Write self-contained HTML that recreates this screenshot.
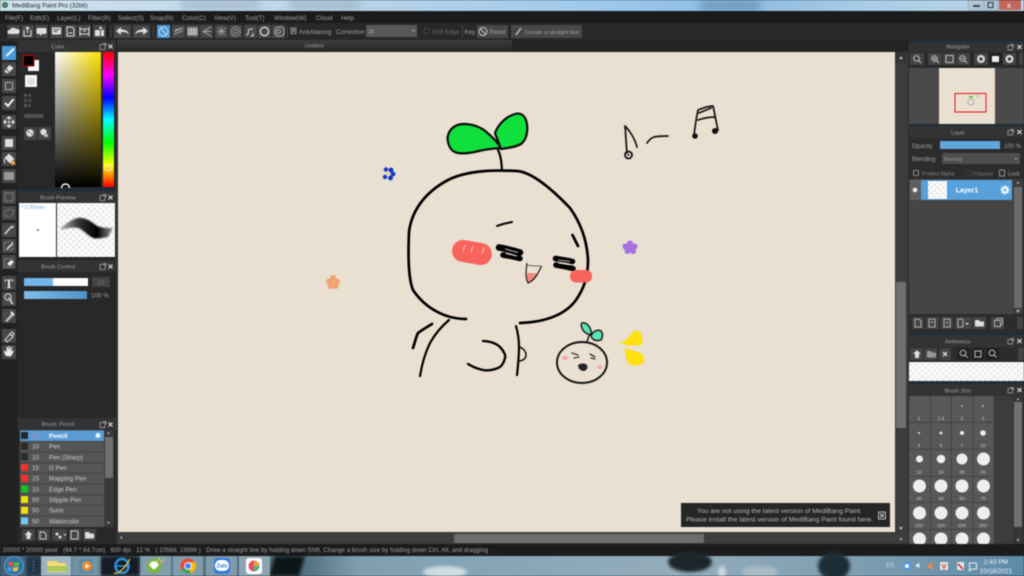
<!DOCTYPE html>
<html><head><meta charset="utf-8"><title>MediBang Paint Pro</title>
<style>
html,body{margin:0;padding:0;width:1024px;height:576px;overflow:hidden;background:#222}
svg{display:block;filter:blur(.42px)}
text{font-family:"Liberation Sans",sans-serif;font-size:6.3px;fill:#a2a2a2;white-space:pre}
.m{text-anchor:middle}
.b{fill:#484848}
.i{fill:#ddd}
.s{fill:none;stroke:#ddd;stroke-width:1}
.k{fill:none;stroke:#000;stroke-width:2.7;stroke-linecap:round;stroke-linejoin:round}
.k1{fill:none;stroke:#111;stroke-width:1.7;stroke-linecap:round;stroke-linejoin:round}
</style></head><body>
<svg width="1024" height="576" viewBox="0 0 1024 576" xmlns="http://www.w3.org/2000/svg">
<defs>
<linearGradient id="tb" x1="0" x2="1" y1="0" y2="0"><stop offset="0" stop-color="#cfe2ee"/><stop offset=".3" stop-color="#bcd6ea"/><stop offset=".45" stop-color="#aecfe9"/><stop offset=".6" stop-color="#9cc8ec"/><stop offset=".72" stop-color="#8dbbe0"/><stop offset=".85" stop-color="#a9cde6"/><stop offset="1" stop-color="#bcd6e6"/></linearGradient>
<linearGradient id="sv1" x1="0" x2="1" y1="0" y2="0"><stop offset="0" stop-color="#fff"/><stop offset="1" stop-color="#ffe000"/></linearGradient>
<linearGradient id="sv2" x1="0" x2="0" y1="0" y2="1"><stop offset="0" stop-color="#000" stop-opacity="0"/><stop offset="1" stop-color="#000"/></linearGradient>
<linearGradient id="hue" x1="0" x2="0" y1="0" y2="1"><stop offset="0" stop-color="#f00"/><stop offset=".17" stop-color="#f0f"/><stop offset=".34" stop-color="#00f"/><stop offset=".5" stop-color="#0ff"/><stop offset=".67" stop-color="#0f0"/><stop offset=".84" stop-color="#ff0"/><stop offset="1" stop-color="#f00"/></linearGradient>
<linearGradient id="task" x1="0" x2="1" y1="0" y2="0"><stop offset="0" stop-color="#3f6278"/><stop offset=".1" stop-color="#5d8094"/><stop offset=".29" stop-color="#4b6878"/><stop offset=".35" stop-color="#7f9fb0"/><stop offset=".5" stop-color="#88a6b8"/><stop offset=".66" stop-color="#93acba"/><stop offset=".85" stop-color="#7c9db0"/><stop offset="1" stop-color="#5d8aa8"/></linearGradient>
<linearGradient id="blue" x1="0" x2="1" y1="0" y2="0"><stop offset="0" stop-color="#7fbdec"/><stop offset="1" stop-color="#4d93cb"/></linearGradient>
<linearGradient id="tab" x1="0" x2="0" y1="0" y2="1"><stop offset="0" stop-color="#3c3c3c"/><stop offset="1" stop-color="#262626"/></linearGradient>
<pattern id="chk" width="6" height="6" patternUnits="userSpaceOnUse"><rect width="6" height="6" fill="#fff"/><rect width="3" height="3" fill="#eaeaea"/><rect x="3" y="3" width="3" height="3" fill="#eaeaea"/></pattern>
<filter id="bl"><feGaussianBlur stdDeviation="1.600"/></filter>
<filter id="bl2"><feGaussianBlur stdDeviation="4"/></filter>
<filter id="bl3"><feGaussianBlur stdDeviation=".7"/></filter>
<linearGradient id="stroke" x1="0" x2="1" y1="0" y2="0"><stop offset="0" stop-color="#bbb"/><stop offset=".35" stop-color="#333"/><stop offset=".7" stop-color="#000"/><stop offset="1" stop-color="#999"/></linearGradient>
</defs>

<!-- base -->
<rect width="1024" height="576" fill="#1f1f1f"/>

<!-- title bar -->
<rect width="1024" height="11" fill="url(#tb)"/>
<g filter="url(#bl2)"><rect x="180" y="0" width="80" height="10" fill="#a9bfd0"/><rect x="700" y="0" width="60" height="11" fill="#6f9cc0"/><rect x="290" y="1" width="70" height="8" fill="#9fb6c6"/></g>
<circle cx="5" cy="5" r="3" fill="#16805a"/><circle cx="5" cy="5" r="1.300" fill="#e9607a"/>
<text x="12" y="7.600" style="fill:#2a2a2a">MediBang Paint Pro (32bit)</text>
<rect x="968" y="0" width="16" height="10" rx="1" fill="#b0c6d6" stroke="#7e96a6" stroke-width=".5"/>
<rect x="973" y="5" width="7" height="2" fill="#444"/>
<rect x="984" y="0" width="14" height="10" fill="#b0c6d6" stroke="#7e96a6" stroke-width=".5"/>
<rect x="988" y="2.500" width="5" height="5" fill="none" stroke="#333" stroke-width="1"/>
<rect x="999" y="0" width="22" height="10" rx="1" fill="#c2655a"/>
<text x="1007" y="8" style="fill:#fff;font-size:8px">x</text>

<!-- menu -->
<rect y="11" width="1024" height="12" fill="#1b1b1b"/>
<g style="font-size:6.500px">
<text x="5" y="20">File(F)</text><text x="30" y="20">Edit(E)</text><text x="57" y="20">Layer(L)</text><text x="88" y="20">Filter(R)</text><text x="118" y="20">Select(S)</text><text x="150" y="20">Snap(N)</text><text x="182" y="20">Color(C)</text><text x="214" y="20">View(V)</text><text x="245" y="20">Tool(T)</text><text x="274" y="20">Window(W)</text><text x="316" y="20">Cloud</text><text x="341" y="20">Help</text>
</g>

<!-- toolbar -->
<rect y="23" width="1024" height="17" fill="#282828"/>
<rect x="6" y="25" width="102" height="13" fill="#1c1c1c"/>
<g class="b">
<rect x="7" y="25" width="13" height="13"/><rect x="21" y="25" width="13" height="13"/><rect x="35" y="25" width="13" height="13"/><rect x="50" y="25" width="13" height="13"/><rect x="64" y="25" width="13" height="13"/><rect x="78" y="25" width="13" height="13"/><rect x="93" y="25" width="13" height="13"/>
<rect x="114" y="25" width="17" height="13"/><rect x="133" y="25" width="17" height="13"/>
<rect x="172" y="25" width="13" height="13"/><rect x="186" y="25" width="13" height="13"/><rect x="200" y="25" width="13" height="13"/><rect x="215" y="25" width="13" height="13"/><rect x="229" y="25" width="13" height="13"/><rect x="244" y="25" width="13" height="13"/><rect x="258" y="25" width="13" height="13"/><rect x="272" y="25" width="13" height="13"/>
</g>
<rect x="157" y="25" width="13" height="13" fill="#4d96d4"/>
<g>
<path class="i" d="M9 34a2 2 0 0 1 1-4 3.500 3.500 0 0 1 6-1 2.600 2.600 0 0 1 2 5z"/>
<path class="s" d="M24 30v6h7v-6M27.500 33v-6M25.500 29l2-2 2 2"/>
<path class="i" d="M38 28h7a1.500 1.500 0 0 1 1.500 1.500v3a1.500 1.500 0 0 1-1.500 1.500h-3l-2 2v-2h-2a1.500 1.500 0 0 1-1.500-1.500v-3a1.500 1.500 0 0 1 1.500-1.500z"/>
<rect class="i" x="52" y="27.500" width="9" height="7" rx="1"/><path d="M53.500 29.500h6M53.500 31.500h4" stroke="#484848"/>
<path class="s" d="M67 27h5l2 2v7h-7zM68.500 33h4"/>
<path class="s" stroke-width=".8" d="M80 27v9M89 27v9M80 29h9M80 34h9M83 31h3"/>
<path class="i" d="M95 30h5v6h-5zM101 30h3v6h-3zM100 26l3 3h-4z"/>
<path class="i" d="M116 31l5-4v2.500c4 0 7 1 8 5-2-2-4-2.500-8-2.500v3z"/>
<path class="i" d="M148 31l-5-4v2.500c-4 0-7 1-8 5 2-2 4-2.500 8-2.500v3z"/>
<circle cx="163.500" cy="31.500" r="4.500" fill="none" stroke="#bfe0fa" stroke-width="1"/><path d="M160.500 28l6 7" stroke="#bfe0fa"/>
<path d="M174 32l9-4M174 34.500l9-4M175 30l8-2" stroke="#999" stroke-width="1.200" fill="none"/>
<path d="M188 28h9v7h-9zM191 28v7M194 28v7M188 30.500h9M188 33h9" stroke="#ccc" stroke-width=".8" fill="#888"/>
<path d="M211 27l-8 4.500 8 4.500M203 31.500h8" stroke="#aaa" fill="none"/>
<path d="M221.500 27v9M217 31.500h9M218 28l7 7M225 28l-7 7" stroke="#bbb" stroke-dasharray="1.500 .8"/>
<circle cx="235.500" cy="31.500" r="4.500" fill="none" stroke="#999" stroke-dasharray="1 .6" stroke-width="1.400"/><circle cx="235.500" cy="31.500" r="2" fill="none" stroke="#999"/>
<path class="s" d="M246 35c4 0 1-6 4-6h3M253 33v3h-2"/>
<circle cx="264.500" cy="31.500" r="4.200" fill="none" stroke="#ddd" stroke-width="1.300"/>
<path d="M275 29l2-2h5l2 2v5l-2 2h-5l-2-2z" fill="none" stroke="#aaa"/><circle cx="278.500" cy="31.500" r="2" fill="none" stroke="#aaa"/>
</g>
<rect x="110.500" y="26" width=".8" height="11" fill="#555"/><rect x="153" y="26" width=".8" height="11" fill="#555"/><rect x="287" y="26" width=".8" height="11" fill="#555"/>
<rect x="291" y="28" width="5" height="5.500" fill="none" stroke="#aaa" stroke-width=".8"/><path d="M292 29l3 3M295 29l-3 3" stroke="#ccc" stroke-width=".6"/>
<text x="299" y="34" style="font-size:6.200px">AntiAliasing</text>
<text x="336" y="34" style="font-size:6.200px">Correction</text>
<rect x="366" y="25" width="51" height="12" fill="#585858"/><text x="368" y="33.500" style="font-size:5.500px;fill:#aaa">26</text><path d="M412 30h3l-1.500 2z" fill="#aaa"/>
<rect x="424" y="28.500" width="5" height="5" fill="none" stroke="#444" stroke-width=".8"/>
<text x="432" y="34" style="fill:#6e6e6e;font-size:6.200px">Soft Edge</text>
<rect x="462" y="25" width=".8" height="12" fill="#555"/>
<text x="464.500" y="34" style="font-size:6.200px">Key</text>
<rect x="477" y="25" width="31" height="13" fill="#474747"/><circle cx="483" cy="31.500" r="4" fill="none" stroke="#ccc"/><path d="M480 28.500l6 6" stroke="#ccc"/><text x="489.500" y="34" style="font-size:6.200px">Reset</text>
<rect x="511" y="25" width="71" height="13" fill="#474747"/><path d="M516 35l5-7" stroke="#ccc" stroke-width="1.200"/><text x="525" y="34" style="font-size:5.900px">Create a straight line</text>

<!-- tab -->
<rect x="117" y="40" width="790" height="12" fill="#242424"/>
<rect x="117" y="40" width="395" height="12" fill="url(#tab)"/>
<text x="314" y="47.500" class="m" style="font-size:5.500px;fill:#9a9a9a">Untitled</text>

<!-- canvas -->
<rect x="116" y="52" width="2" height="492" fill="#333"/>
<rect x="118" y="52" width="777" height="480" fill="#eae0d2"/>

<!-- drawing -->
<path d="M495 133c3-8 10-16 20-19 7-2 11 3 12 10 1 9-1 16-6 20-5 3-13 4-20 5-2-6-4-10-6-16z" fill="#10e03c" stroke="#0b0b0b" stroke-width="2.200" stroke-linejoin="round"/>
<path d="M447.500 138c1-9 8-14 16-14 9 0 18 3 24 9 6 5 11 11 13.500 15-7 .5-14 1-22 3-8 2-15 3-21 2-6-1-10-6-10.500-15z" fill="#10e03c" stroke="#0b0b0b" stroke-width="2.200" stroke-linejoin="round"/>
<path class="k" style="stroke-width:2.200" d="M498 150c3 6 3.500 13 4 20"/>
<path class="k" d="M466 319C445 319 425 308 413 290C408 278 408 255 409 232C412 208 428 190 450 179C470 170 495 170 517 171C530 172 548 185 570 208C580 222 587 240 588 260C588 275 585 287 576 300C565 315 545 322 520 323"/>
<path class="k" d="M572.500 235c2 4 4 8 5.500 11"/>
<path class="k" style="stroke-width:2" d="M497 226c5-2 10-3 15-4"/>
<g transform="rotate(10 472 252)"><rect x="452" y="241.500" width="40" height="22" rx="11" fill="#f8635c"/></g>
<path d="M465 245l-2 6M473 246l-2 6M484 247l-2 7" stroke="#fcc7c0" stroke-width="1"/>
<path d="M499 247.500c7 1 14 3 21 5" stroke="#000" stroke-width="6.500" stroke-linecap="round" fill="none"/>
<path d="M503 255c6 1 11 2 17 3.500" stroke="#000" stroke-width="5.500" stroke-linecap="round" fill="none"/>
<path d="M505 249l13 3.500M506 253.500l11 2.500" stroke="#f1ece2" stroke-width=".9"/>
<path d="M555.500 258.500c6 1 12 1.500 17 3M556 265c6 1 11 2 17 3.500" stroke="#000" stroke-width="5.500" stroke-linecap="round" fill="none"/>
<path d="M558 260l12 1.500M558 263l12 1.800" stroke="#f1ece2" stroke-width=".8"/>
<path d="M527 273c4 0 8 0 10 1-2 4-5 8-9 9-1-3-2-6-1-10z" fill="#f08a80"/>
<path d="M527 263c-1 8-2 14 1 20 6-2 10-9 13.500-17" fill="none" stroke="#111" stroke-width="1.100"/>
<path d="M527 265c4 1 9 1 14 1" fill="none" stroke="#111" stroke-width=".6"/>
<rect x="570" y="270" width="22" height="12.500" rx="6" fill="#f8635c"/>
<path class="k" d="M432 324c-5 3-10 6-14 9-2 4-3 9-5 15"/>
<path class="k" style="stroke-width:2.200" d="M449 320c-7 6-14 14-19 23-5 10-8 21-10 33"/>
<path class="k" style="stroke-width:2.300" d="M483 341c6 0 13 2 17 6 4 4 6 9 5 11-1 5-4 9-7 10-5 2-10 3-15 2-5-1-10-3-15-6"/>
<path class="k" style="stroke-width:2.200" d="M516 326c2 7 3 14 3 21 0 10-1 19-2 28"/>
<path class="k" style="stroke-width:1.400" d="M520 347c4 2 6 5 6 8 0 3-2 5-6 6"/>

<ellipse cx="582" cy="362.500" rx="25" ry="20.500" fill="none" stroke="#111" stroke-width="1.900"/>
<path d="M582 323c4-1 8 3 9 8 1 2 0 4-1 4-3-1-7-3-8-7-1-2-1-4 0-5z" fill="#5fe3b0" stroke="#111" stroke-width="1.400"/>
<path d="M592 334c2-3 6-5 9-3 2 2 2 6 0 9-3 1-7 1-9-2-1-1-1-3 0-4z" fill="#5fe3b0" stroke="#111" stroke-width="1.400"/>
<path d="M592 334c-3-1-4 5-5 8" fill="none" stroke="#111" stroke-width="1.400"/>
<ellipse cx="565" cy="358" rx="3" ry="2" fill="#f5a0a8"/><ellipse cx="600" cy="367" rx="2.500" ry="2.500" fill="#f5b0b4"/>
<path class="k1" style="stroke-width:1.100" d="M572 353l6 2M574 358l5-1M590 354l5 3M591 358l4 1"/>
<path d="M578 365c3-2 7-2 9 0 1 3 0 5-3 6-3 0-6-2-6-6z" fill="#222"/>
<path d="M620 343c5-2 9-5 12-10 3-3 8-3 9 1 2 4 2 8 0 11-6 1-15 1-21-2z" fill="#ffe010"/>
<path d="M625 348c5 2 12 3 17 6 3 3 3 8 0 10-4 2-10 2-13 0-3-4-4-11-4-16z" fill="#ffe010"/>
<g fill="#a272e2"><circle cx="630" cy="243.500" r="3"/><circle cx="634.500" cy="246.500" r="3"/><circle cx="633" cy="251" r="3"/><circle cx="627.500" cy="251" r="3"/><circle cx="625.500" cy="246.500" r="3"/><circle cx="630" cy="247.500" r="3"/></g><circle cx="630" cy="247" r="1" fill="#e86a8a"/>
<g fill="#f0a274"><circle cx="333" cy="278" r="3"/><circle cx="337" cy="281.500" r="3"/><circle cx="335.500" cy="286" r="3"/><circle cx="330.500" cy="286" r="3"/><circle cx="329" cy="281.500" r="3"/><circle cx="333" cy="282.500" r="3"/></g><circle cx="333" cy="282" r="1.200" fill="#f3c050"/>
<g fill="#1535c8"><circle cx="386" cy="169.500" r="2.200"/><circle cx="391" cy="170" r="2.400"/><circle cx="393" cy="174" r="2.400"/><circle cx="390.500" cy="178" r="2.400"/><circle cx="385" cy="177" r="2.200"/></g><circle cx="388.500" cy="173.500" r="1" fill="#e7c84a"/>
<path class="k1" d="M625 126c1 10 1 18 2 27M625 126c5 5 10 13 12 21"/>
<circle cx="628.500" cy="155" r="3.500" fill="none" stroke="#111" stroke-width="1.800"/><circle cx="628.500" cy="155" r="1" fill="#111"/>
<path class="k1" d="M647 143c2-3 4-5 7-6 4-1 9-1 14-1"/>
<path class="k1" d="M698 110c-2 9-3 17-4 25M698 110c5-2 10-4 15-4 2 8 3 16 5 24M698 120c6-2 11-3 17-3M699 113l12-5"/>
<circle cx="695" cy="136" r="2.800" fill="#111"/><circle cx="715" cy="131" r="3" fill="#111"/>

<!-- scrollbars -->
<rect x="895" y="52" width="13" height="492" fill="#3c3c3c"/>
<rect x="896" y="282" width="10" height="146" fill="#6f6f6f"/>
<rect x="895" y="52" width="12" height="11" fill="#333"/><path d="M899 59l2-3 2 3z" fill="#bbb"/>
<path d="M899 527l2 3 2-3z" fill="#bbb"/><circle cx="901" cy="539" r="1.200" fill="#aaa"/>
<rect x="118" y="532" width="777" height="12" fill="#3d3d3d"/>
<rect x="454" y="534" width="250" height="9" rx="1" fill="#6d6d6d"/>
<path d="M122 536v3l-2-1.500z" fill="#bbb"/>

<!-- notification -->
<rect x="681" y="503" width="209" height="24" fill="#262626"/>
<text x="779.500" y="513" class="m" style="fill:#b8b8b8;font-size:6.800px">You are not using the latest version of MediBang Paint.</text>
<text x="779.500" y="521.500" class="m" style="fill:#b8b8b8;font-size:6.800px">Please install the latest version of MediBang Paint found here.</text>
<rect x="878.500" y="512" width="7" height="7" fill="none" stroke="#ddd" stroke-width=".8"/><path d="M880 513.500l4 4M884 513.500l-4 4" stroke="#ddd" stroke-width=".9"/>

<!-- left tool strip -->
<rect x="0" y="40" width="18" height="504" fill="#222"/>
<g class="b">
<rect x="2" y="62" width="14" height="14"/><rect x="2" y="79" width="14" height="14"/><rect x="2" y="96" width="14" height="14"/><rect x="2" y="115" width="14" height="14"/><rect x="2" y="136" width="14" height="14"/><rect x="2" y="152" width="14" height="14"/><rect x="2" y="169" width="14" height="14"/><rect x="2" y="190" width="14" height="14"/><rect x="2" y="206" width="14" height="14"/><rect x="2" y="223" width="14" height="14"/><rect x="2" y="239" width="14" height="14"/><rect x="2" y="255" width="14" height="14"/><rect x="2" y="276" width="14" height="14"/><rect x="2" y="292" width="14" height="14"/><rect x="2" y="309" width="14" height="14"/><rect x="2" y="329" width="14" height="14"/><rect x="2" y="345" width="14" height="14"/>
</g>
<rect x="2" y="46" width="14" height="14" fill="#4d9ad9"/>
<path d="M5 57l2-3 6-6 1.500 1.500-6 6z" fill="#e8f2fa"/>
<path d="M4.500 71l5-6 4 3-5 5H6z" fill="#e6e6e6"/><path d="M6 69l3 3" stroke="#484848"/>
<rect x="5.500" y="82.500" width="7" height="7" fill="none" stroke="#aaa"/>
<path d="M5 103l3 3 5.500-7" fill="none" stroke="#eee" stroke-width="2"/>
<path d="M9 116.500v11M3.500 122h11M9 116.500l-2 2h4zM9 127.500l-2-2h4zM3.500 122l2-2v4zM14.500 122l-2-2v4z" fill="#ddd" stroke="#ddd" stroke-width=".8"/>
<rect x="5" y="139" width="8" height="8" fill="#ddd"/>
<path d="M5 158l4-4 5 5-4 4zM5 158c-1 2-1 4 0 5" fill="#ddd" stroke="#ddd" stroke-width=".7"/><circle cx="13" cy="163" r="2" fill="#e8a33a"/>
<rect x="4" y="172" width="10" height="8" fill="#999"/>
<rect x="5" y="193" width="8" height="8" fill="none" stroke="#999" stroke-dasharray="1.300 1"/>
<ellipse cx="9" cy="213" rx="5" ry="3.500" fill="none" stroke="#888" stroke-dasharray="1.300 .8" transform="rotate(-20 9 213)"/>
<path d="M5 234l6-7" stroke="#ddd" stroke-width="1.500"/><path d="M12 225l1 1.500 1.500.5-1.500.5-.5 1.500-1-1.500-1.500-.5 1.500-.5z" fill="#ddd"/>
<rect x="4.500" y="242" width="8" height="8" fill="none" stroke="#999" stroke-dasharray="1.300 1"/><path d="M7 249l6-6" stroke="#eee" stroke-width="1.500"/>
<rect x="4.500" y="259" width="8" height="8" fill="none" stroke="#999" stroke-dasharray="1.300 1"/><path d="M7 264l4-4 3 2-4 4z" fill="#eee"/>
<text x="9" y="288" class="m" style="font-size:13px;font-weight:bold;fill:#e8e8e8;font-family:'Liberation Serif',serif">T</text>
<circle cx="8" cy="297" r="3.200" fill="none" stroke="#ddd"/><path d="M10 301l3 3" stroke="#ddd" stroke-width="1.500"/><path d="M8 297l4 4" stroke="#ddd"/>
<path d="M5 321l7-8 2 2-7 7z" fill="#bbb"/><path d="M11 312l3 3" stroke="#eee" stroke-width="2"/>
<path d="M5 340l5-6 3 3-6 5zM10 334l2-2 2 2-2 2z" fill="none" stroke="#ddd"/>
<path d="M6 356c-1-2-2-3-2-5l1-.500 1.500 2V347l1-.500 1 4V346h1l.5 4.500 1-4 1 .500-.5 5 1.500-1.500 1 .500c-1 2-2 3-3 5.500z" fill="#eee"/>
<path d="M0 40h18" stroke="#333"/>

<!-- left panels -->
<rect x="18" y="40" width="98" height="504" fill="#282828"/>
<rect x="18" y="40" width="98" height="12" fill="#333"/>
<text x="58" y="48.500" class="m" style="font-size:5.500px">Color</text>
<path d="M100 44.500h5v5h-5zM103 43.500h3v3" fill="none" stroke="#aaa" stroke-width=".7"/><path d="M108.500 44.500l4 4M112.500 44.500l-4 4" stroke="#ddd" stroke-width="1.200"/>
<rect x="55" y="52" width="46" height="135" fill="url(#sv1)"/>
<rect x="55" y="52" width="46" height="135" fill="url(#sv2)"/>
<rect x="103" y="52" width="11" height="135" fill="url(#hue)"/>
<circle cx="108.500" cy="168" r="3" fill="none" stroke="#eee" stroke-width="1"/>
<path d="M61.500 188a4 4 0 0 1 8 0" fill="none" stroke="#fff" stroke-width="1.400"/>
<rect x="28" y="60" width="11" height="11" fill="#fff"/>
<rect x="23.500" y="55.500" width="10.500" height="10.500" fill="#000" stroke="#c00" stroke-width="1"/>
<rect x="25" y="75" width="12" height="12" fill="#f4f4f4"/><rect x="28" y="78" width="6" height="6" fill="#ddd"/>
<text x="24" y="97" style="font-size:4.500px">R 0</text><text x="24" y="102" style="font-size:4.500px">G 0</text><text x="24" y="107" style="font-size:4.500px">B 0</text>
<text x="24" y="118" style="font-size:5px">#000000</text>
<rect x="24" y="127" width="13" height="13" rx="1" fill="#444"/><rect x="38" y="127" width="13" height="13" rx="1" fill="#444"/>
<circle cx="30" cy="133" r="3.800" fill="#ddd"/><circle cx="29" cy="132" r=".8" fill="#444"/><circle cx="32" cy="134" r=".8" fill="#444"/>
<circle cx="43.500" cy="132" r="3.200" fill="#ddd"/><rect x="44" y="134" width="4" height="3" fill="#bbb"/>

<rect x="18" y="188" width="98" height="3" fill="#1d2c38"/>
<rect x="18" y="191" width="98" height="12" fill="#333"/>
<text x="58" y="199.500" class="m" style="font-size:5.500px">Brush Preview</text>
<path d="M100 195.500h5v5h-5zM103 194.500h3v3" fill="none" stroke="#aaa" stroke-width=".7"/><path d="M108.500 195.500l4 4M112.500 195.500l-4 4" stroke="#ddd" stroke-width="1.200"/>
<rect x="19" y="203" width="37" height="54" fill="#fff"/>
<rect x="57" y="203" width="58" height="54" fill="url(#chk)"/>
<text x="21" y="209" style="font-size:5.500px;fill:#6fb2e8">* 0.90mm</text>
<circle cx="38" cy="230" r="1" fill="#555"/>
<path d="M60 228c5-3 10-8 17-10 8-1 14 3 20 8 5 2 10 2 16 2l-5 9c-6 1-11 2-15 1-6-3-10-8-14-10-6-1-12 0-17 2z" fill="url(#stroke)" filter="url(#bl3)"/>

<rect x="18" y="257" width="98" height="3" fill="#242424"/>
<rect x="18" y="260" width="98" height="12" fill="#333"/>
<text x="58" y="268.500" class="m" style="font-size:5.500px">Brush Control</text>
<path d="M100 264.500h5v5h-5zM103 263.500h3v3" fill="none" stroke="#aaa" stroke-width=".7"/><path d="M108.500 264.500l4 4M112.500 264.500l-4 4" stroke="#ddd" stroke-width="1.200"/>
<rect x="24" y="278" width="64" height="8" fill="#fff"/><rect x="24" y="278" width="29" height="8" fill="#72b6ea"/>
<rect x="92" y="277" width="18" height="10" fill="#444"/><text x="101" y="284.500" class="m" style="fill:#777">22</text>
<rect x="24" y="291" width="63" height="8" fill="url(#blue)"/>
<text x="91" y="297.500">100 %</text>

<rect x="18" y="418" width="98" height="12" fill="#333"/>
<text x="58" y="426" class="m" style="font-size:5.500px">Brush: Pencil</text>
<path d="M100 422.500h5v5h-5zM103 421.500h3v3" fill="none" stroke="#aaa" stroke-width=".7"/><path d="M108.500 422.500l4 4M112.500 422.500l-4 4" stroke="#ddd" stroke-width="1.200"/>
<rect x="20" y="430" width="84" height="97" fill="#555"/>
<rect x="20" y="430.500" width="84" height="10.500" fill="#5a9cd6"/>
<g fill="#3d3d3d"><rect x="20" y="441" width="84" height=".8"/><rect x="20" y="451.600" width="84" height=".8"/><rect x="20" y="462.300" width="84" height=".8"/><rect x="20" y="473" width="84" height=".8"/><rect x="20" y="483.600" width="84" height=".8"/><rect x="20" y="494.300" width="84" height=".8"/><rect x="20" y="505" width="84" height=".8"/><rect x="20" y="515.600" width="84" height=".8"/></g>
<rect x="21" y="432" width="7" height="7" fill="#1d2a34"/><rect x="21" y="442.800" width="7" height="7" fill="#2b2b2b"/><rect x="21" y="453.400" width="7" height="7" fill="#2b2b2b"/><rect x="21" y="464" width="7" height="7" fill="#f23030"/><rect x="21" y="474.800" width="7" height="7" fill="#f23030"/><rect x="21" y="485.400" width="7" height="7" fill="#12c020"/><rect x="21" y="496" width="7" height="7" fill="#f0e010"/><rect x="21" y="506.800" width="7" height="7" fill="#f0e010"/><rect x="21" y="517.400" width="7" height="7" fill="#70c8f5"/>
<g>
<text x="32" y="438" style="fill:#e87aa0">22</text><text x="49" y="438" style="fill:#fff;font-weight:bold">Pencil</text>
<text x="32" y="448.600" style="fill:#ccc">10</text><text x="49" y="448.600" style="fill:#ccc">Pen</text>
<text x="32" y="459.300" style="fill:#ccc">10</text><text x="49" y="459.300" style="fill:#ccc">Pen (Sharp)</text>
<text x="32" y="470" style="fill:#ccc">15</text><text x="49" y="470" style="fill:#ccc">G Pen</text>
<text x="32" y="480.600" style="fill:#ccc">15</text><text x="49" y="480.600" style="fill:#ccc">Mapping Pen</text>
<text x="32" y="491.300" style="fill:#ccc">10</text><text x="49" y="491.300" style="fill:#ccc">Edge Pen</text>
<text x="32" y="502" style="fill:#ccc">50</text><text x="49" y="502" style="fill:#ccc">Stipple Pen</text>
<text x="32" y="512.600" style="fill:#ccc">50</text><text x="49" y="512.600" style="fill:#ccc">Sumi</text>
<text x="32" y="523.300" style="fill:#ccc">50</text><text x="49" y="523.300" style="fill:#ccc">Watercolor</text>
</g>
<circle cx="98" cy="435.500" r="2.500" fill="#e8f3fb"/>
<rect x="104" y="430" width="10" height="97" fill="#3a3a3a"/>
<rect x="105" y="437" width="8" height="41" fill="#707070"/>
<path d="M107 434l1.500-2 1.500 2zM107 522l1.500 2 1.500-2z" fill="#bbb"/>
<g><rect x="22" y="529" width="13" height="12" fill="#444"/><rect x="37" y="529" width="13" height="12" fill="#444"/><rect x="52" y="529" width="15" height="12" fill="#444"/><rect x="69" y="529" width="12" height="12" fill="#444"/><rect x="83" y="529" width="13" height="12" fill="#444"/></g>
<path d="M28.500 531l4 4h-2v4h-4v-4h-2z" fill="#ddd"/>
<path d="M40 532h4l2 2v5h-6z" fill="none" stroke="#ccc"/>
<circle cx="57" cy="534" r="1.500" fill="#ddd"/><circle cx="60" cy="537" r="1.500" fill="#ddd"/><path d="M63.500 534h3l-1.500 2z" fill="#ddd"/>
<path d="M71 531h6l1 1v7h-7z" fill="none" stroke="#ccc"/>
<path d="M85 532h4l1 1.500h4v5h-9z" fill="#ddd"/>

<!-- right panels -->
<rect x="908" y="40" width="116" height="504" fill="#2c2c2c"/>
<rect x="909" y="40" width="115" height="2" fill="#1f2e3a"/>
<rect x="909" y="42" width="115" height="10" fill="#333"/>
<text x="958" y="48.500" class="m" style="font-size:5.500px">Navigator</text>
<path d="M1008 45.500h4.500v4.500h-4.500zM1010.500 44.500h3v3" fill="none" stroke="#aaa" stroke-width=".7"/><path d="M1017.500 45l4 4M1021.500 45l-4 4" stroke="#ddd" stroke-width="1.200"/>
<rect x="909" y="52" width="115" height="15" fill="#292929"/>
<rect x="910" y="53" width="14" height="12" fill="#444"/><rect x="928" y="53" width="14" height="12" fill="#444"/><rect x="943" y="53" width="13" height="12" fill="#444"/><rect x="957" y="53" width="13" height="12" fill="#444"/><rect x="974" y="53" width="14" height="12" fill="#444"/><rect x="989" y="53" width="13" height="12" fill="#222"/><rect x="1003" y="53" width="13" height="12" fill="#444"/><rect x="1019" y="53" width="4" height="12" fill="#444"/>
<g fill="none" stroke="#ccc" stroke-width=".9"><circle cx="916.500" cy="58.500" r="2.800"/><path d="M918.500 60.500l2.500 2.500"/><circle cx="934.500" cy="58.500" r="2.800"/><path d="M936.500 60.500l2.500 2.500M933 58.500h3M934.500 57v3"/><rect x="946" y="55.500" width="7" height="7"/><circle cx="962.500" cy="58.500" r="2.800"/><path d="M964.500 60.500l2.500 2.500M961 58.500h3"/></g>
<circle cx="981" cy="59" r="4" fill="#ddd"/><circle cx="981" cy="59" r="1.800" fill="#444"/>
<rect x="992" y="56" width="7" height="6" fill="#eee"/>
<circle cx="1009.500" cy="59" r="4" fill="#ddd"/><circle cx="1009.500" cy="59" r="1.800" fill="#444"/>
<rect x="909" y="68" width="115" height="56" fill="#4a4a4a"/>
<rect x="939" y="68" width="56" height="56" fill="#eae0d2"/>
<rect x="955" y="93.500" width="31" height="18.500" fill="none" stroke="#e01010" stroke-width="1"/>
<circle cx="971" cy="102" r="3" fill="none" stroke="#999" stroke-width=".8"/><path d="M969 97h4" stroke="#3cc03c" stroke-width="1.500"/><circle cx="978" cy="96" r=".7" fill="#5a5"/>

<rect x="909" y="124" width="115" height="2" fill="#1f2e3a"/>
<rect x="909" y="126" width="115" height="12" fill="#333"/>
<text x="958" y="134.500" class="m" style="font-size:5.500px">Layer</text>
<path d="M1008 130.500h4.500v4.500h-4.500zM1010.500 129.500h3v3" fill="none" stroke="#aaa" stroke-width=".7"/><path d="M1017.500 130l4 4M1021.500 130l-4 4" stroke="#ddd" stroke-width="1.200"/>
<text x="912" y="148" style="font-size:6px">Opacity</text>
<rect x="940" y="141" width="60" height="8" fill="#62a6de"/>
<text x="1004" y="148" style="font-size:6px">100 %</text>
<text x="912" y="161" style="font-size:6px">Blending</text>
<rect x="942" y="153" width="78" height="11" fill="#4e4e4e"/>
<text x="944" y="161" style="font-size:5.500px;fill:#999">Normal</text><path d="M1014 158h4l-2 2z" fill="#999"/>
<rect x="913.500" y="170.500" width="5" height="5" rx=".5" fill="none" stroke="#aaa" stroke-width=".8"/><text x="922" y="175.500" style="font-size:5.500px;fill:#888">Protect Alpha</text>
<rect x="966" y="170.500" width="5" height="5" fill="none" stroke="#444" stroke-width=".8"/><text x="973" y="175.500" style="font-size:5.500px;fill:#777">Clipping</text>
<rect x="999.500" y="170" width="5" height="6" fill="none" stroke="#aaa" stroke-width=".8"/><text x="1008" y="175.500" style="font-size:5.500px;fill:#aaa">Lock</text>
<rect x="909" y="179" width="104" height="135" fill="#454545"/>
<rect x="910" y="180" width="11" height="20" fill="#5f5f5f"/><circle cx="915" cy="190" r="2.300" fill="#eee"/>
<rect x="921" y="180" width="91" height="20" fill="#56a0dc"/>
<rect x="928" y="181" width="19" height="18" fill="url(#chk)"/>
<text x="967" y="192.500" class="m" style="font-weight:bold;fill:#fff;font-size:7px">Layer1</text>
<path d="M1001.500 186.500l7 7M1008.500 186.500l-7 7M1005 185v10M1000 190h10" stroke="#f0f6fb" stroke-width="1"/><circle cx="1005" cy="190" r="3.800" fill="#f0f6fb"/><circle cx="1005" cy="190" r="1.300" fill="#56a0dc"/>
<rect x="1013" y="179" width="10" height="135" fill="#3c3c3c"/>
<rect x="1014" y="187" width="8" height="121" fill="#6a6a6a"/>
<path d="M1016.500 183.500l1.500-2 1.500 2zM1016 310h4l-2 3z" fill="#bbb"/>
<rect x="909" y="315" width="115" height="18" fill="#2c2c2c"/>
<g fill="#444"><rect x="912" y="317" width="12" height="12"/><rect x="926" y="317" width="13" height="12"/><rect x="941" y="317" width="12" height="12"/><rect x="955" y="317" width="17" height="12"/><rect x="973" y="317" width="13" height="12"/><rect x="991" y="317" width="13" height="12"/></g>
<g fill="none" stroke="#ccc" stroke-width=".8"><path d="M915 319h4l2 2v6h-6z"/><path d="M929 319h6v8h-6zM930.500 322h3"/><path d="M944 319h6v8h-6zM947 321v3"/><path d="M958 319h4l1 1v7h-5z"/><rect x="994.500" y="320.500" width="6" height="6"/><path d="M996.500 320.500v-2h6v6h-2"/></g>
<path d="M965 323h4l-2 2z" fill="#ddd"/><path d="M975 320h4l1 1.500h4v5h-9z" fill="#ddd"/>
<rect x="1017" y="317" width="6" height="12" fill="#444"/>

<rect x="909" y="333" width="115" height="2" fill="#1f2e3a"/>
<rect x="909" y="335" width="115" height="12" fill="#333"/>
<text x="958" y="343.500" class="m" style="font-size:5.500px">Reference</text>
<path d="M1008 339.500h4.500v4.500h-4.500zM1010.500 338.500h3v3" fill="none" stroke="#aaa" stroke-width=".7"/><path d="M1017.500 339l4 4M1021.500 339l-4 4" stroke="#ddd" stroke-width="1.200"/>
<g fill="#444"><rect x="910" y="348" width="13" height="12"/><rect x="924" y="348" width="13" height="12"/><rect x="939" y="348" width="12" height="12"/></g>
<g fill="#222"><rect x="957" y="348" width="13" height="12"/><rect x="972" y="348" width="12" height="12"/><rect x="986" y="348" width="13" height="12"/></g>
<rect x="1018" y="348" width="6" height="12" fill="#444"/>
<path d="M917 350l4 4h-2v4h-4v-4h-2z" fill="#ddd"/><path d="M927 351h4l1 1.500h4v5h-9z" fill="#999"/>
<path d="M943 352l4 4M947 352l-4 4" stroke="#ddd" stroke-width="1.300"/>
<g fill="none" stroke="#ccc" stroke-width=".9"><circle cx="963" cy="353" r="2.800"/><path d="M965 355l2.500 2.500"/><rect x="975" y="351" width="6" height="6"/><circle cx="992" cy="353" r="2.800"/><path d="M994 355l2.500 2.500"/></g>
<rect x="909" y="362" width="115" height="19" fill="url(#chk)"/>
<rect x="909" y="381" width="115" height="3" fill="#1f2e3a"/>
<rect x="909" y="384" width="115" height="12" fill="#333"/>
<text x="958" y="392.500" class="m" style="font-size:5.500px">Brush Size</text>
<path d="M1008 388.500h4.500v4.500h-4.500zM1010.500 387.500h3v3" fill="none" stroke="#aaa" stroke-width=".7"/><path d="M1017.500 388l4 4M1021.500 388l-4 4" stroke="#ddd" stroke-width="1.200"/>
<rect x="909" y="396" width="85" height="148" fill="#585858"/>
<rect x="994" y="396" width="19" height="148" fill="#3c3c3c"/>
<rect x="1013" y="396" width="11" height="148" fill="#353535"/>
<rect x="1014" y="402" width="8" height="125" fill="#707070"/>
<path d="M1016.500 400l1.500-2 1.500 2z" fill="#bbb"/><circle cx="1018" cy="540" r="1.200" fill="#aaa"/>
<g fill="#3f3f3f"><rect x="930" y="396" width=".8" height="148"/><rect x="951" y="396" width=".8" height="148"/><rect x="972.500" y="396" width=".8" height="148"/><rect x="993.500" y="396" width=".8" height="148"/><rect x="909" y="422" width="85" height=".8"/><rect x="909" y="449" width="85" height=".8"/><rect x="909" y="476" width="85" height=".8"/><rect x="909" y="502" width="85" height=".8"/><rect x="909" y="529" width="85" height=".8"/></g>
<g fill="#eee">
<circle cx="962" cy="406" r=".7"/><circle cx="983" cy="406" r=".8"/>
<circle cx="919" cy="433" r="1"/><circle cx="941" cy="433" r="1.400"/><circle cx="962" cy="433" r="2"/><circle cx="983" cy="433" r="2.800"/>
<circle cx="919.500" cy="459" r="3.500"/><circle cx="941" cy="459" r="4.300"/><circle cx="962" cy="459" r="5.500"/><circle cx="983.500" cy="459" r="6.500"/>
<circle cx="919.500" cy="486" r="6.500"/><circle cx="941" cy="486" r="6.500"/><circle cx="962" cy="486" r="6.500"/><circle cx="983.500" cy="486" r="6.500"/>
<circle cx="919.500" cy="513" r="6.500"/><circle cx="941" cy="513" r="6.500"/><circle cx="962" cy="513" r="6.500"/><circle cx="983.500" cy="513" r="6.500"/>
<circle cx="919.500" cy="539" r="6.500"/><circle cx="941" cy="539" r="6.500"/><circle cx="962" cy="539" r="6.500"/><circle cx="983.500" cy="539" r="6.500"/>
</g>
<g>
<text x="919" y="420" class="m" style="font-size:4.800px;fill:#ccc">1</text><text x="941" y="420" class="m" style="font-size:4.800px;fill:#ccc">1.5</text><text x="962" y="420" class="m" style="font-size:4.800px;fill:#ccc">2</text><text x="983" y="420" class="m" style="font-size:4.800px;fill:#ccc">3</text>
<text x="919" y="447" class="m" style="font-size:4.800px;fill:#ccc">4</text><text x="941" y="447" class="m" style="font-size:4.800px;fill:#ccc">5</text><text x="962" y="447" class="m" style="font-size:4.800px;fill:#ccc">7</text><text x="983" y="447" class="m" style="font-size:4.800px;fill:#ccc">10</text>
<text x="919" y="473.500" class="m" style="font-size:4.800px;fill:#ccc">12</text><text x="941" y="473.500" class="m" style="font-size:4.800px;fill:#ccc">15</text><text x="962" y="473.500" class="m" style="font-size:4.800px;fill:#ccc">20</text><text x="983" y="473.500" class="m" style="font-size:4.800px;fill:#ccc">25</text>
<text x="919" y="500" class="m" style="font-size:4.800px;fill:#ccc">30</text><text x="941" y="500" class="m" style="font-size:4.800px;fill:#ccc">40</text><text x="962" y="500" class="m" style="font-size:4.800px;fill:#ccc">50</text><text x="983" y="500" class="m" style="font-size:4.800px;fill:#ccc">70</text>
<text x="919" y="527" class="m" style="font-size:4.800px;fill:#ccc">100</text><text x="941" y="527" class="m" style="font-size:4.800px;fill:#ccc">150</text><text x="962" y="527" class="m" style="font-size:4.800px;fill:#ccc">200</text><text x="983" y="527" class="m" style="font-size:4.800px;fill:#ccc">300</text>
</g>

<!-- status bar -->
<rect y="544" width="1024" height="12" fill="#1c1c1c"/>
<text x="3" y="552" textLength="485" lengthAdjust="spacing" style="font-size:6px">20000 * 20000 pixel   (84.7 * 84.7cm)   600 dpi   12 %   ( 10568, 15996 )   Draw a straight line by holding down Shift, Change a brush size by holding down Ctrl, Alt, and dragging</text>

<!-- taskbar -->
<rect y="556" width="1024" height="20" fill="url(#task)"/>
<g filter="url(#bl)">
<rect x="26" y="556" width="16" height="20" fill="#233644"/>
<rect x="100" y="556" width="40" height="20" fill="#131e26"/>
<path d="M275 556h30l-6 20h-30z" fill="#0d1418"/><ellipse cx="445" cy="572" rx="22" ry="6" fill="#cfdbe2"/><ellipse cx="690" cy="562" rx="22" ry="10" fill="#1a262c"/><ellipse cx="834" cy="566" rx="16" ry="14" fill="#1f2d36"/><ellipse cx="722" cy="572" rx="4" ry="6" fill="#cfd9e0"/><ellipse cx="760" cy="572" rx="18" ry="6" fill="#a9bcc6"/>
</g>
<circle cx="14" cy="566" r="9.500" fill="#2f72a8"/><circle cx="14" cy="566" r="9.500" fill="none" stroke="#7fb0d2" stroke-width=".7"/>
<path d="M9 561.500c2 1 3.500 1 4.500.5l-.8 4c-1 .5-2.500.5-4.500-.5z" fill="#e85b3a"/><path d="M14.500 562c1.500.5 3 .5 5-.5l-.8 4c-2 1-3.500 1-5 .5z" fill="#68b53a"/><path d="M8 566.500c2 1 3.500 1 4.500.5l-.8 4c-1 .5-2.500.5-4.500-.5z" fill="#4a98e0"/><path d="M13.500 567c1.500.5 3 .5 5-.5l-.8 4c-2 1-3.500 1-5 .5z" fill="#ecc23a"/>
<rect x="41" y="556" width="30" height="20" fill="#c4d2da" fill-opacity=".7"/><rect x="72" y="556" width="29" height="20" fill="#a6bcc8" fill-opacity=".35"/>
<path d="M47 561h10l1 2h8v9H48z" fill="#f4d870"/><path d="M47 566h20v5H48z" fill="#a8c85a"/>
<rect x="79" y="559" width="14" height="14" rx="2" fill="#5a8aaa"/><circle cx="87" cy="566" r="5" fill="#ee8a2a"/><path d="M85.500 563.500l4 2.500-4 2.500z" fill="#fff"/>
<ellipse cx="122" cy="566" rx="6.500" ry="7" fill="none" stroke="#2e90d8" stroke-width="2.600"/><path d="M116 566h12" stroke="#2e90d8" stroke-width="1.600"/><path d="M114 573c4 2 12-6 16-14" fill="none" stroke="#f0c030" stroke-width="1.300"/>
<rect x="140" y="556" width="31" height="20" fill="#a6bcc8" fill-opacity=".55"/>
<circle cx="154" cy="566" r="6" fill="#fff" stroke="#79b83c" stroke-width="2.500"/><path d="M150 566a4 4 0 0 0 8 0" fill="none" stroke="#79b83c" stroke-width="1.800"/><path d="M160 557l-3 5M164 559l-4 4" stroke="#e9c43a" stroke-width="1.200"/>
<rect x="173" y="556" width="30" height="20" fill="#a6bcc8" fill-opacity=".55"/>
<circle cx="188" cy="566" r="7.500" fill="#e8453c"/><path d="M188 566l-6.500 3.800A7.500 7.500 0 0 0 190.500 573z" fill="#34a853"/><path d="M188 562h7a7.500 7.500 0 0 1-4.500 11z" fill="#fbbc05"/><circle cx="188" cy="566" r="3.400" fill="#4285f4" stroke="#fff" stroke-width="1"/>
<rect x="206" y="556" width="31" height="20" fill="#a6bcc8" fill-opacity=".55"/>
<rect x="214" y="558" width="16" height="16" rx="4" fill="#2f7be0"/><rect x="215" y="560" width="14" height="11" rx="5" fill="#fff"/><text x="222" y="567.500" class="m" style="font-size:5.200px;fill:#2f7be0;font-weight:bold">Zalo</text>
<rect x="239" y="556" width="31" height="20" fill="#a6bcc8" fill-opacity=".7"/>
<rect x="246" y="558" width="16" height="16" rx="3" fill="#fff"/><circle cx="254" cy="566" r="5.500" fill="#e8506a"/><path d="M254 560.500a5.500 5.500 0 0 1 0 11z" fill="#4ab88a"/><path d="M254 560.500a5.500 5.500 0 0 1 5.500 5.500h-5.500z" fill="#eda43a"/>

<g fill="#8aa4b2"><rect x="33" y="561" width="1" height="1"/><rect x="33" y="564" width="1" height="1"/><rect x="33" y="567" width="1" height="1"/><rect x="33" y="570" width="1" height="1"/></g>
<text x="886" y="567" style="font-size:6px;fill:#ccd6dc">EN</text>
<circle cx="907" cy="566" r="4" fill="#4a9af0"/><circle cx="907" cy="566" r="2" fill="#fff"/>
<path d="M916 564h2l1.500-1.500v6l-1.500-1.500h-2z" fill="#dfe6ea"/>
<path d="M928 564h2l2.500-2.500v9l-2.500-2.500h-2z" fill="#e88a4a"/>
<rect x="940" y="562" width="8" height="8" fill="#e2e2e2"/><text x="944" y="569" class="m" style="font-size:7px;fill:#c0392b;font-weight:bold">V</text>
<rect x="957" y="562" width="7" height="8" fill="#dfe6ea"/><path d="M958 564l5 5" stroke="#d22" stroke-width="1.500"/>
<path d="M969.500 563h7v6h-5l-2 2z" fill="none" stroke="#eee"/>
<text x="996" y="564" class="m" style="font-size:6.500px;fill:#eef2f4">2:43 PM</text>
<text x="996" y="573" class="m" style="font-size:6.500px;fill:#eef2f4">10/18/2021</text>
</svg>
</body></html>
